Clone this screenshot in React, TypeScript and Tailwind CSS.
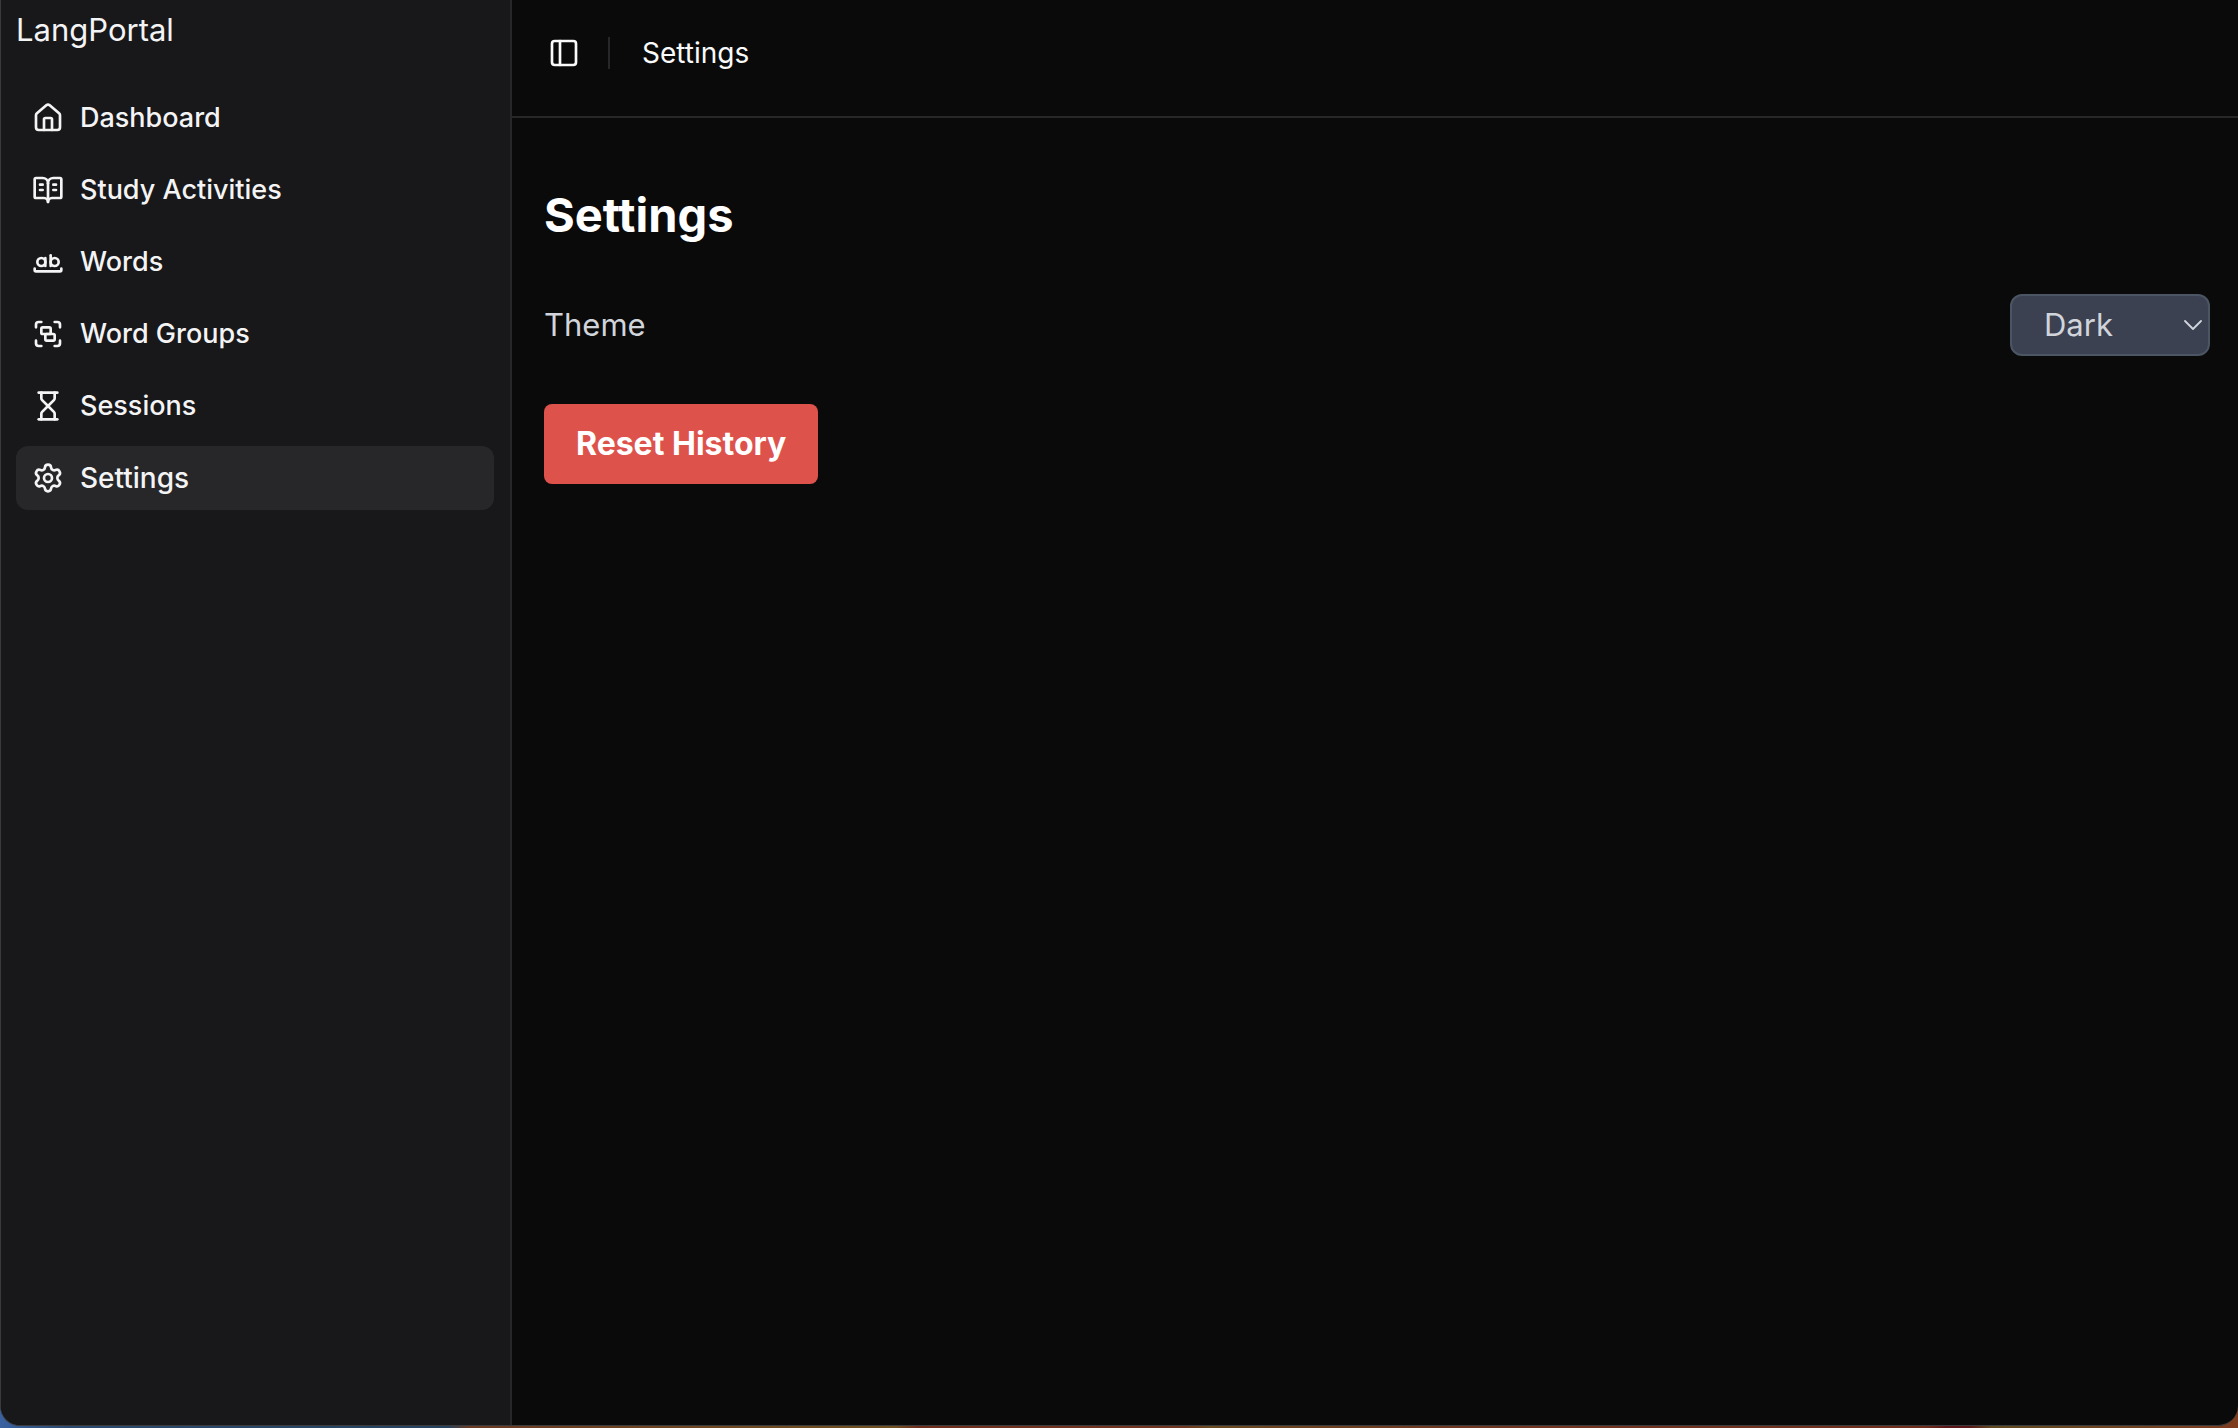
import React, { useState } from "react";
import {
  BookOpenText,
  Group,
  Hourglass,
  House,
  PanelLeft,
  Settings,
  WholeWord,
} from "lucide-react";

const items = [
  { label: "Dashboard", icon: House },
  { label: "Study Activities", icon: BookOpenText },
  { label: "Words", icon: WholeWord },
  { label: "Word Groups", icon: Group },
  { label: "Sessions", icon: Hourglass },
  { label: "Settings", icon: Settings, active: true },
];

export default function App() {
  const [theme, setTheme] = useState("Dark");
  return (
    <div className="flex min-h-screen flex-col bg-[linear-gradient(to_right,#3a62a0,#2c4a70_3%,#27425f_20%,#6b3a22_21%,#70501f_40%,#6f2e1c_41%,#70351f_53%,#6a4a20_54%,#70351f_65%,#6f2e1c_86%,#5a1618_87%,#5a1618_88%,#5f4a20_89%,#7f3c1f)] pb-[2px] font-['Inter',sans-serif] antialiased">
      <div className="flex flex-1 overflow-hidden rounded-b-[20px] border-b border-l border-[#3a3a3c] bg-[#0a0a0a]">
        <aside className="w-[511px] shrink-0 border-r-2 border-[#27272a] bg-[#18181b] text-[#f4f4f5]">
          <div className="pl-[15px] pt-[6px] text-[31px] leading-[48px]">LangPortal</div>
          <nav className="mt-8 flex flex-col gap-2 pl-[15px] pr-4">
            {items.map(({ label, icon: Icon, active }) => (
              <a
                key={label}
                href="#"
                aria-current={active ? "page" : undefined}
                className={
                  active
                    ? "flex h-16 items-center gap-4 rounded-xl bg-[#27272a] px-4 text-[28px] font-medium"
                    : "flex h-16 items-center gap-4 rounded-xl px-4 text-[27px] font-medium"
                }
              >
                <Icon className="size-8 shrink-0" />
                <span>{label}</span>
              </a>
            ))}
          </nav>
        </aside>
        <main className="min-w-0 flex-1 text-[#fafafa]">
          <header className="flex h-[118px] items-start border-b-2 border-[#27272a] pl-6 pt-[25px]">
            <button
              type="button"
              aria-label="Toggle sidebar"
              className="flex size-14 items-center justify-center"
            >
              <PanelLeft className="size-8" />
            </button>
            <div className="ml-4 mt-3 h-8 w-[2px] bg-[#27272a]" />
            <span className="ml-8 text-[28px] leading-[56px]">Settings</span>
          </header>
          <section className="pl-8 pr-7 pt-16">
            <h1 className="text-[47px] font-bold leading-[66px] text-white">Settings</h1>
            <div className="mt-[46px] flex items-center justify-between">
              <label htmlFor="theme" className="text-[31px] leading-[62px] text-[#d1d5db]">
                Theme
              </label>
              <div className="relative">
                <select
                  id="theme"
                  value={theme}
                  onChange={(e) => setTheme(e.target.value)}
                  className="block h-[62px] w-[200px] appearance-none rounded-xl border-2 border-[#4b5563] bg-[#3b4150] pl-8 text-[31px] text-[#d1d5db]"
                >
                  <option>Dark</option>
                  <option>Light</option>
                </select>
                <svg
                  viewBox="0 0 18 10"
                  className="pointer-events-none absolute right-2 top-[26px] h-[10px] w-[18px]"
                  fill="none"
                  stroke="#d1d5db"
                  strokeWidth="1.8"
                  strokeLinecap="round"
                  strokeLinejoin="round"
                >
                  <path d="M1 1l8 8 8-8" />
                </svg>
              </div>
            </div>
            <button
              type="button"
              className="mt-12 h-20 rounded-lg bg-[#de524c] px-8 text-[32px] font-bold text-white"
            >
              Reset History
            </button>
          </section>
        </main>
      </div>
    </div>
  );
}
